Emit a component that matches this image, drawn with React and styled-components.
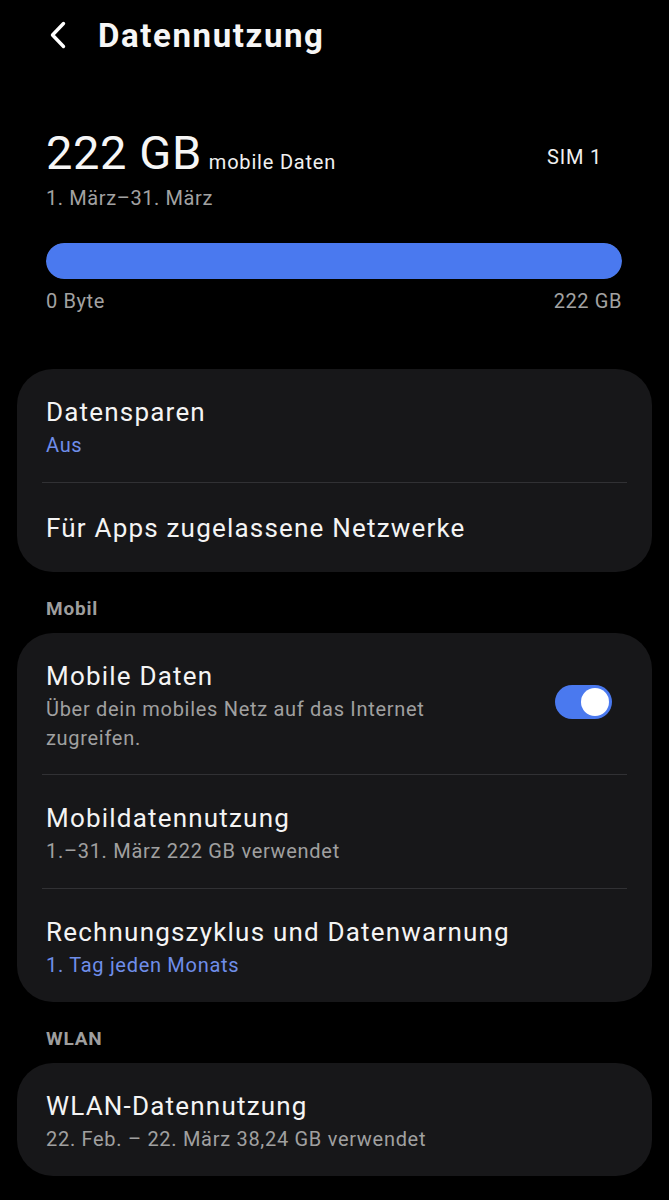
import styled, { createGlobalStyle } from "styled-components";

const GlobalStyle = createGlobalStyle`
  html, body {
    margin: 0;
    padding: 0;
    background: #000000;
  }
  body {
    font-family: Roboto, "Noto Sans", "Liberation Sans", sans-serif;
    color: #f4f4f4;
    -webkit-font-smoothing: antialiased;
  }
`;

const Screen = styled.div`
  width: 669px;
  min-height: 1200px;
  background: #000000;
  box-sizing: border-box;
  padding-bottom: 30px;
`;

const Header = styled.div`
  display: flex;
  align-items: center;
  height: 70px;
  padding-left: 45px;
  gap: 27px;
`;

const BackButton = styled.button`
  background: none;
  border: 0;
  padding: 0;
  width: 26px;
  height: 32px;
  display: flex;
  align-items: center;
  justify-content: center;
  cursor: pointer;
`;

const Title = styled.h1`
  margin: 0;
  font-size: 33px;
  font-weight: 700;
  letter-spacing: 1.6px;
  color: #f6f6f6;
`;

const Summary = styled.section`
  padding: 55px 47px 0 46px;
`;

const SummaryTop = styled.div`
  display: flex;
  align-items: baseline;
  justify-content: space-between;
`;

const Amount = styled.div`
  display: flex;
  align-items: baseline;
  gap: 7px;
`;

const AmountValue = styled.span`
  font-size: 47px;
  font-weight: 400;
  letter-spacing: 0.6px;
  color: #f6f6f6;
`;

const AmountUnit = styled.span`
  font-size: 20px;
  letter-spacing: 0.8px;
  color: #f0f0f0;
`;

const Sim = styled.span`
  font-size: 20px;
  letter-spacing: 0.8px;
  color: #f0f0f0;
  margin-right: 20px;
  transform: translateY(-5px);
`;

const Period = styled.div`
  margin-top: 6px;
  font-size: 20px;
  letter-spacing: 0.6px;
  color: #a2a2a2;
`;

const Bar = styled.div`
  margin-top: 33px;
  height: 36px;
  border-radius: 18px;
  background: #262629;
  overflow: hidden;
`;

const BarFill = styled.div`
  height: 100%;
  border-radius: 18px;
  background: #4a79ef;
`;

const Scale = styled.div`
  display: flex;
  justify-content: space-between;
  margin-top: 10px;
  font-size: 20px;
  letter-spacing: 0.6px;
  color: #a2a2a2;
`;

const Card = styled.div`
  margin: ${(p) => p.$top || 0}px 17px 0;
  background: #171719;
  border-radius: 36px;
  overflow: hidden;
`;

const Row = styled.div`
  display: flex;
  align-items: ${(p) => (p.$top ? "flex-start" : "center")};
  justify-content: space-between;
  padding: ${(p) =>
    p.$single ? "29px 29px 28px" : p.$top ? "27px 29px 21px" : "27px 29px 22px"};
`;

const Divider = styled.div`
  height: 1px;
  background: #313134;
  margin: 0 25px;
`;

const RowText = styled.div`
  display: flex;
  flex-direction: column;
  max-width: ${(p) => p.$max || "none"};
`;

const RowTitle = styled.div`
  font-size: 26px;
  line-height: 32px;
  letter-spacing: 1.2px;
  color: #f4f4f4;
`;

const RowSub = styled.div`
  margin-top: 3px;
  font-size: 20px;
  line-height: 29px;
  letter-spacing: 0.7px;
  color: ${(p) => (p.$accent ? "#6f8ee9" : "#a0a0a0")};
`;

const SectionLabel = styled.div`
  margin: 27px 0 14px 46px;
  font-size: 19px;
  line-height: 20px;
  font-weight: 700;
  letter-spacing: 0.8px;
  color: #9e9e9e;
`;

const Switch = styled.div`
  width: 57px;
  height: 34px;
  border-radius: 17px;
  background: #4a79ef;
  margin-top: 25px;
  margin-right: 11px;
  display: flex;
  align-items: center;
  justify-content: ${(p) => (p.$on ? "flex-end" : "flex-start")};
  padding: 0 3px;
  box-sizing: border-box;
  flex-shrink: 0;
`;

const Knob = styled.div`
  width: 28px;
  height: 28px;
  border-radius: 50%;
  background: #ffffff;
`;

const used = 222;
const limit = 222;

export default function App() {
  return (
    <Screen>
      <GlobalStyle />
      <Header>
        <BackButton aria-label="Zurück">
          <svg width="20" height="30" viewBox="0 0 20 30" fill="none">
            <path
              d="M15.5 3.5 L4.5 15 L15.5 26.5"
              stroke="#ffffff"
              strokeWidth="3.4"
              strokeLinecap="round"
              strokeLinejoin="round"
            />
          </svg>
        </BackButton>
        <Title>Datennutzung</Title>
      </Header>

      <Summary>
        <SummaryTop>
          <Amount>
            <AmountValue>222 GB</AmountValue>
            <AmountUnit>mobile Daten</AmountUnit>
          </Amount>
          <Sim>SIM 1</Sim>
        </SummaryTop>
        <Period>1. März–31. März</Period>
        <Bar>
          <BarFill style={{ width: `${(used / limit) * 100}%` }} />
        </Bar>
        <Scale>
          <span>0 Byte</span>
          <span>222 GB</span>
        </Scale>
      </Summary>

      <Card $top={56}>
        <Row>
          <RowText>
            <RowTitle>Datensparen</RowTitle>
            <RowSub $accent>Aus</RowSub>
          </RowText>
        </Row>
        <Divider />
        <Row $single>
          <RowTitle>Für Apps zugelassene Netzwerke</RowTitle>
        </Row>
      </Card>

      <SectionLabel>Mobil</SectionLabel>
      <Card>
        <Row $top>
          <RowText $max="420px">
            <RowTitle>Mobile Daten</RowTitle>
            <RowSub>Über dein mobiles Netz auf das Internet zugreifen.</RowSub>
          </RowText>
          <Switch $on>
            <Knob />
          </Switch>
        </Row>
        <Divider />
        <Row>
          <RowText>
            <RowTitle>Mobildatennutzung</RowTitle>
            <RowSub>1.–31. März 222 GB verwendet</RowSub>
          </RowText>
        </Row>
        <Divider />
        <Row>
          <RowText>
            <RowTitle>Rechnungszyklus und Datenwarnung</RowTitle>
            <RowSub $accent>1. Tag jeden Monats</RowSub>
          </RowText>
        </Row>
      </Card>

      <SectionLabel>WLAN</SectionLabel>
      <Card>
        <Row>
          <RowText>
            <RowTitle>WLAN-Datennutzung</RowTitle>
            <RowSub>22. Feb. – 22. März 38,24 GB verwendet</RowSub>
          </RowText>
        </Row>
      </Card>
    </Screen>
  );
}
